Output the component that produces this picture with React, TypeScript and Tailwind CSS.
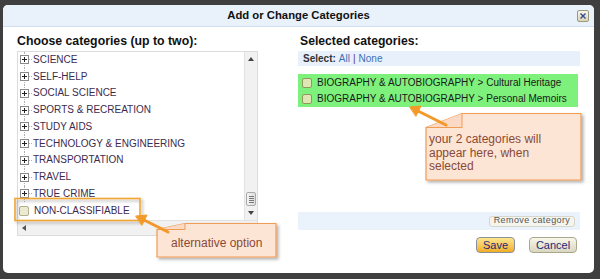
import React from "react";

const leftItems = [
  "SCIENCE",
  "SELF-HELP",
  "SOCIAL SCIENCE",
  "SPORTS & RECREATION",
  "STUDY AIDS",
  "TECHNOLOGY & ENGINEERING",
  "TRANSPORTATION",
  "TRAVEL",
  "TRUE CRIME",
];

const selected = [
  "BIOGRAPHY & AUTOBIOGRAPHY > Cultural Heritage",
  "BIOGRAPHY & AUTOBIOGRAPHY > Personal Memoirs",
];

function PlusBox() {
  return (
    <svg width="9" height="9" viewBox="0 0 9 9" className="relative">
      <rect x="0.5" y="0.5" width="8" height="8" fill="#fff" stroke="#8a8a8a" />
      <path d="M2 4.5H7M4.5 2V7" stroke="#222" strokeWidth="1" />
    </svg>
  );
}

function TreeRow({ label }: { label: string }) {
  return (
    <div className="flex h-[16.75px] items-center pl-[2px]">
      <div className="relative flex h-full w-[9px] items-center justify-center">
        <div className="absolute left-[4px] top-0 bottom-0 border-l border-dotted border-[#b0b0b0]" />
        <PlusBox />
      </div>
      <div className="w-[3px] border-t border-dotted border-[#b0b0b0]" />
      <span className="ml-[1px] text-[10px] leading-none text-[#3d2b4f]">{label}</span>
    </div>
  );
}

function Checkbox({ tone }: { tone: "beige" | "olive" }) {
  return (
    <span
      className={
        tone === "beige"
          ? "inline-block h-[10px] w-[10px] rounded-[2px] border border-[#b4b08c] bg-[#ecebd2]"
          : "inline-block h-[10px] w-[10px] rounded-[2px] border border-[#8e9a5c] bg-[#dfe6b4]"
      }
    />
  );
}

export default function App() {
  return (
    <div
      className="relative h-[279px] w-[600px] overflow-hidden bg-[#3f3f3f] pl-[3px] pt-[5px]"
      style={{ fontFamily: '"Liberation Sans", Arial, sans-serif' }}
    >
      <div className="flex h-[268px] w-[591px] flex-col overflow-hidden rounded-[5px] bg-white">
        {/* title bar */}
        <div className="relative flex h-[22px] items-center justify-center border-b border-[#cfdff0] bg-[#e9f1fb]">
          <span className="text-[11.3px] font-bold text-[#111]">Add or Change Categories</span>
          <div className="absolute right-[5px] top-[5px] flex h-[12px] w-[12px] items-center justify-center rounded-[2px] border border-[#9c9a7e] bg-gradient-to-b from-[#faf8ea] to-[#d9d5b4]">
            <svg width="8" height="8" viewBox="0 0 8 8">
              <path d="M1.5 1.5L6.5 6.5M6.5 1.5L1.5 6.5" stroke="#34489c" strokeWidth="1.4" />
            </svg>
          </div>
        </div>

        <div className="flex flex-1">
          {/* left column */}
          <div className="ml-[14px] w-[241px]">
            <div className="h-[24px] pt-[4px] text-[12.3px] font-bold leading-[20px] text-[#111]">
              Choose categories (up to two):
            </div>
            <div className="flex h-[185px] flex-col border border-[#dcdcdc]">
              <div className="flex flex-1">
                <div className="flex-1 overflow-hidden">
                  <div className="-mt-[0.5px]">
                    {leftItems.map((item) => (
                      <TreeRow key={item} label={item} />
                    ))}
                    <div className="flex h-[18px] items-center pl-[1px]">
                      <Checkbox tone="beige" />
                      <span className="ml-[5px] text-[10px] leading-none text-[#3d2b4f]">NON-CLASSIFIABLE</span>
                    </div>
                  </div>
                </div>
                <div className="flex w-[13px] flex-col border-l border-[#e2e2e2] bg-[#f1f1f1]">
                  <div className="flex h-[14px] items-center justify-center">
                    <svg width="6" height="4" viewBox="0 0 6 4">
                      <path d="M0 4L3 0L6 4Z" fill="#444" />
                    </svg>
                  </div>
                  <div className="flex-1" />
                  <div className="mx-[1px] flex h-[14px] flex-col items-center justify-center gap-[1px] rounded-[2px] border border-[#a9a9a9] bg-gradient-to-r from-[#f4f4f4] to-[#dedede]">
                    <span className="h-px w-[5px] bg-[#777]" />
                    <span className="h-px w-[5px] bg-[#777]" />
                    <span className="h-px w-[5px] bg-[#777]" />
                    <span className="h-px w-[5px] bg-[#777]" />
                  </div>
                  <div className="flex h-[14px] items-center justify-center">
                    <svg width="6" height="4" viewBox="0 0 6 4">
                      <path d="M0 0L6 0L3 4Z" fill="#444" />
                    </svg>
                  </div>
                </div>
              </div>
              <div className="flex h-[16px] items-center border-t border-[#e2e2e2] bg-[#f1f1f1] pl-[4px]">
                <svg width="4" height="6" viewBox="0 0 4 6">
                  <path d="M4 0L0 3L4 6Z" fill="#555" />
                </svg>
              </div>
            </div>
          </div>

          {/* right column */}
          <div className="ml-[40px] flex w-[282px] flex-col">
            <div className="h-[24px] pl-[2px] pt-[4px] text-[12.2px] font-bold leading-[20px] text-[#111]">
              Selected categories:
            </div>
            <div className="flex h-[15px] items-center bg-[#e8f1fb] pl-[5px] text-[10px]">
              <span className="font-bold text-[#333]">Select:</span>
              <span className="ml-[3px] text-[#3d6fb4]">All</span>
              <span className="mx-[3px] text-[#5a3a7a]">|</span>
              <span className="text-[#3d6fb4]">None</span>
            </div>
            <div className="h-[146px] pt-[8px]">
              <div className="mr-[2px] flex h-[33px] flex-col justify-center bg-[#7ef17c]">
                {selected.map((s) => (
                  <div key={s} className="flex h-[16px] items-center pl-[4px]">
                    <Checkbox tone="olive" />
                    <span className="ml-[5px] text-[10px] leading-none text-[#1a1a1a]">{s}</span>
                  </div>
                ))}
              </div>
            </div>
            <div className="flex h-[18px] items-center justify-end bg-[#eaf3fc] pr-[5px]">
              <div className="flex h-[11px] w-[86px] items-center justify-center rounded-[3px] border border-[#d6d6cc] bg-[#f5f5ee] text-[9px] tracking-[0.4px] text-[#555]">
                Remove category
              </div>
            </div>
            <div className="mt-[7px] flex justify-end gap-[14px] pr-[3px]">
              <button className="flex h-[16px] w-[39px] items-center justify-center rounded-[4px] border border-[#8a8f9c] bg-gradient-to-b from-[#fde68c] to-[#f0ae1c] text-[11px] text-[#1c2a7a]">
                Save
              </button>
              <button className="flex h-[16px] w-[48px] items-center justify-center rounded-[4px] border border-[#a9a88e] bg-gradient-to-b from-[#f8f7ea] to-[#d9d7c0] text-[11px] text-[#1c2a7a]">
                Cancel
              </button>
            </div>
          </div>
        </div>
      </div>

      {/* annotations drawn over the dialog */}
      <svg className="pointer-events-none absolute left-0 top-0" width="600" height="279" viewBox="0 0 600 279">
        <defs>
          <filter id="sh" x="-10%" y="-10%" width="130%" height="140%">
            <feDropShadow dx="2" dy="2" stdDeviation="1.5" floodColor="#000" floodOpacity="0.3" />
          </filter>
        </defs>
        <rect x="15" y="198.5" width="125" height="22" fill="none" stroke="#f2a532" strokeWidth="1.6" filter="url(#sh)" />

        <g filter="url(#sh)">
          <path d="M157 229.5L185 223.5H276V257H157Z" fill="#fde5d5" stroke="#ef9c54" strokeWidth="1.2" />
          <path d="M185 223.5V229.5H157" fill="#fbd9c4" stroke="#ef9c54" strokeWidth="1" />
        </g>
        <g filter="url(#sh)">
          <path d="M426 127.5L462 113.5H581V180H426Z" fill="#fde5d5" stroke="#ef9c54" strokeWidth="1.2" />
          <path d="M462 113.5V127.5H426" fill="#fbd9c4" stroke="#ef9c54" strokeWidth="1" />
        </g>

        <g stroke="#f3992a" strokeWidth="3" strokeLinecap="round" fill="#f3992a">
          <line x1="168" y1="232" x2="144" y2="220" />
          <path d="M136 216L147 215L142 225Z" strokeWidth="1" strokeLinejoin="round" />
          <line x1="446" y1="125" x2="418" y2="111" />
          <path d="M410 107L421 106L416 116Z" strokeWidth="1" strokeLinejoin="round" />
        </g>
      </svg>

      <div className="absolute left-[171px] top-[235px] text-[12px] leading-[16px] text-[#8a4a35]">alternative option</div>
      <div className="absolute left-[429px] top-[133px] w-[128px] text-[12px] leading-[13.5px] text-[#8a4a35]">
        your 2 categories will appear here, when selected
      </div>
    </div>
  );
}
